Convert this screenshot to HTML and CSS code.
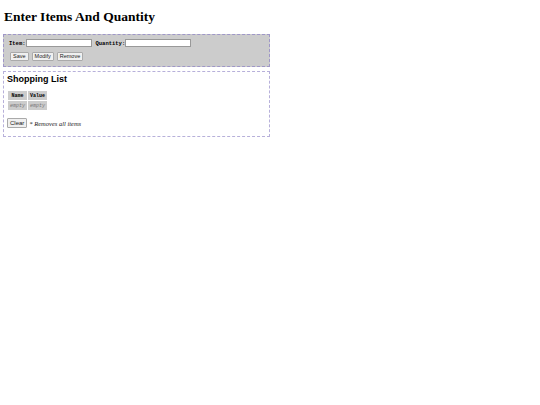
FILE: index.html
```html
<!DOCTYPE html>
<html>
<head>
<meta charset="utf-8">
<link rel="stylesheet" href="styles.css">
</head>
<body>
<h1 class="title">Enter Items And Quantity</h1>
<div class="entry">
  <div class="fields">
    <label class="lbl">Item:</label><input class="inp" type="text">
    <label class="lbl lbl-q">Quantity:</label><input class="inp" type="text">
  </div>
  <div class="buttons">
    <button class="btn">Save</button>
    <button class="btn">Modify</button>
    <button class="btn">Remove</button>
  </div>
</div>
<div class="list">
  <h2 class="list-title">Shopping List</h2>
  <table class="tbl">
    <tr><th>Name</th><th>Value</th></tr>
    <tr><td>empty</td><td>empty</td></tr>
  </table>
  <div class="clear-row">
    <button class="btn btn-clear">Clear</button>
    <span class="note">* Removes all items</span>
  </div>
</div>
</body>
</html>
```
FILE: styles.css
```css
body {
  margin: 0;
  padding: 0 3px;
  font-family: "Liberation Serif", serif;
  width: 267px;
}
.title {
  font-family: "Liberation Serif", serif;
  font-size: 13.5px;
  font-weight: bold;
  margin: 9px 0 0 1px;
  height: 25px;
  line-height: 16px;
}
.entry {
  background: #cccccc;
  border: 1px dashed #9f97c8;
  padding: 0 0 0 5px;
  box-sizing: border-box;
  height: 33px;
}
.fields {
  display: flex;
  align-items: center;
  margin-top: 3px;
  height: 10px;
}
.lbl {
  font-family: "Liberation Mono", monospace;
  font-weight: bold;
  font-size: 5.5px;
}
.lbl-q { margin-left: 4px; }
.inp {
  width: 66px;
  height: 8px;
  box-sizing: border-box;
  border: 1px solid #999;
  padding: 0;
  margin: 0;
  background: #fff;
}
.buttons {
  display: flex;
  gap: 3px;
  margin-top: 4px;
  margin-left: 1px;
}
.btn {
  font-family: "Liberation Sans", sans-serif;
  font-size: 5.5px;
  height: 9px;
  padding: 0 2px;
  border: 1px solid #aaa;
  background: #f0f0f0;
  color: #222;
  border-radius: 1px;
  line-height: 7px;
}
.btn-clear {
  font-size: 6px;
  padding: 0 2px;
  height: 10px;
}
.list {
  margin-top: 4px;
  border: 1px dashed #b7b0da;
  background: #fff;
  height: 66px;
  box-sizing: border-box;
  padding: 0 0 0 2px;
}
.list-title {
  font-family: "Liberation Sans", sans-serif;
  font-size: 9px;
  font-weight: bold;
  margin: 1px 0 0 1px;
  height: 12px;
  line-height: 12px;
}
.tbl {
  border-collapse: separate;
  border-spacing: 1px;
  margin-left: 1px;
  margin-top: 5px;
}
.tbl th, .tbl td {
  background: #cccccc;
  font-family: "Liberation Mono", monospace;
  font-size: 5px;
  padding: 1px 2px;
  height: 7px;
}
.tbl th { font-weight: bold; }
.tbl td { color: #777; font-style: italic; }
.clear-row {
  display: flex;
  align-items: center;
  gap: 2px;
  margin-top: 7px;
  margin-left: 1px;
}
.note {
  font-family: "Liberation Serif", serif;
  font-style: italic;
  font-size: 6.5px;
  color: #222;
}
```
